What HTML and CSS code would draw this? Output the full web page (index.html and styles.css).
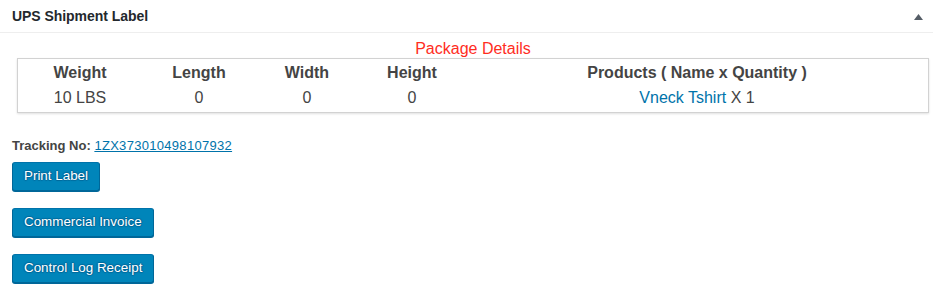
FILE: index.html
```html
<!DOCTYPE html>
<html lang="en">
<head>
<meta charset="utf-8">
<title>UPS Shipment Label</title>
<link rel="stylesheet" href="styles.css">
</head>
<body>
<div class="postbox">
  <div class="hndle">
    <h2 class="hndle-title">UPS Shipment Label</h2>
    <button class="toggle" aria-label="Toggle panel">
      <svg width="9" height="6" viewBox="0 0 9 6"><path d="M4.5 0 L9 6 L0 6 Z" fill="#555d66"/></svg>
    </button>
  </div>
  <div class="inside">
    <div class="package">
      <div class="package-title">Package Details</div>
      <div class="package-box">
        <table class="package-table">
          <colgroup>
            <col class="c-weight"><col class="c-length"><col class="c-width"><col class="c-height"><col class="c-products">
          </colgroup>
          <thead>
            <tr><th>Weight</th><th>Length</th><th>Width</th><th>Height</th><th>Products ( Name x Quantity )</th></tr>
          </thead>
          <tbody>
            <tr><td>10 LBS</td><td>0</td><td>0</td><td>0</td><td><a href="#" class="product-link">Vneck Tshirt</a> X 1</td></tr>
          </tbody>
        </table>
      </div>
    </div>
    <p class="tracking"><strong>Tracking No:</strong> <a href="#" class="tracking-link">1ZX373010498107932</a></p>
    <div class="actions">
      <a href="#" class="button-primary">Print Label</a>
      <a href="#" class="button-primary">Commercial Invoice</a>
      <a href="#" class="button-primary">Control Log Receipt</a>
    </div>
  </div>
</div>
</body>
</html>
```
FILE: styles.css
```css
html, body {
  margin: 0;
  padding: 0;
  background: #fff;
}
body {
  font-family: "Liberation Sans", Arial, Helvetica, sans-serif;
  color: #444;
}
.postbox {
  width: 933px;
  min-height: 304px;
  background: #fff;
}
.hndle {
  height: 32px;
  border-bottom: 1px solid #eeeeee;
  padding: 0 10px 0 12px;
  display: flex;
  align-items: center;
  justify-content: space-between;
}
.hndle-title {
  margin: 0;
  font-size: 14px;
  font-weight: bold;
  letter-spacing: -0.05px;
  color: #23282d;
  line-height: 19px;
}
.toggle {
  border: 0;
  background: none;
  padding: 0;
  width: 9px;
  height: 6px;
  display: flex;
  margin-top: 1px;
}
.inside {
  padding: 6px 4px 0 12px;
}
.package {
  margin-left: 5px;
}
.package-title {
  text-align: center;
  color: #ff2d1e;
  font-size: 16px;
  line-height: 19px;
}
.package-box {
  border: 1px solid #d2d2d2;
  box-shadow: 0 1px 2px rgba(0, 0, 0, 0.12);
  padding: 1px 0 2px;
}
.package-table {
  width: 100%;
  border-collapse: collapse;
  table-layout: fixed;
  font-size: 16px;
  color: #444;
}
.c-weight { width: 124px; }
.c-length { width: 114px; }
.c-width { width: 102px; }
.c-height { width: 108px; }
.package-table th,
.package-table td {
  padding: 0;
  line-height: 25px;
  text-align: center;
  white-space: nowrap;
}
.package-table th {
  font-weight: bold;
}
.product-link {
  color: #0073aa;
  text-decoration: none;
}
.tracking {
  margin: 24px 0 7px;
  font-size: 13px;
  line-height: 18px;
  color: #444;
}
.tracking-link {
  color: #0073aa;
  text-decoration: underline;
  letter-spacing: 0.3px;
}
.actions {
  display: flex;
  flex-direction: column;
  align-items: flex-start;
  gap: 17px;
}
.button-primary {
  display: inline-block;
  box-sizing: border-box;
  height: 29px;
  line-height: 26px;
  padding: 0 11px 1px;
  font-size: 13.4px;
  color: #fff;
  text-decoration: none;
  background: #0085ba;
  border: 1px solid;
  border-color: #0073aa #006799 #006799;
  border-radius: 3px;
  box-shadow: 0 1px 0 #006799;
  text-shadow: 0 -1px 1px #006799, 1px 0 1px #006799, 0 1px 1px #006799, -1px 0 1px #006799;
  white-space: nowrap;
}
```
